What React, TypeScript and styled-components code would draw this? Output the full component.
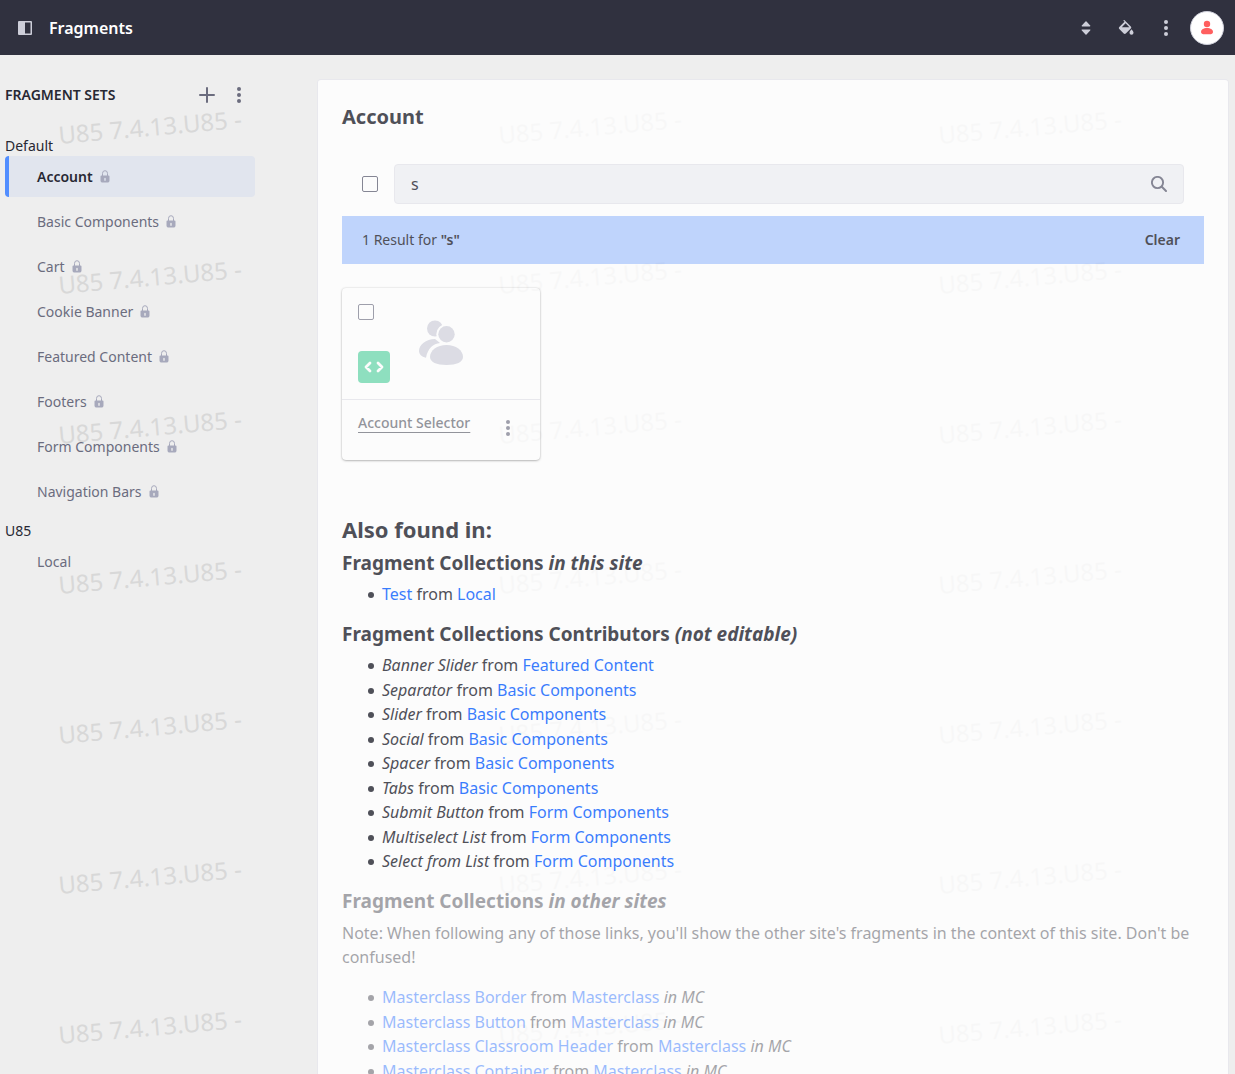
import React from 'react';
import styled, { createGlobalStyle } from 'styled-components';

const GlobalStyle = createGlobalStyle`
  *, *::before, *::after { box-sizing: border-box; }
  body {
    margin: 0;
    background: #eeeeee;
    color: #272833;
    font-family: "Noto Sans", "Open Sans", sans-serif;
    font-size: 16px;
    line-height: 24px;
  }
  h1, h2, h3, p, ul { margin: 0; padding: 0; }
  button, input { font: inherit; }
`;

const Page = styled.div`
  display: flex;
  flex-direction: column;
  height: 100vh;
  overflow: hidden;
`;

const TopBar = styled.header`
  display: flex;
  align-items: center;
  flex: none;
  height: 55px;
  padding: 0 11px 0 5px;
  background: #30313f;
  color: #ffffff;
`;

const TopTitle = styled.h1`
  flex: 1;
  margin-left: 4px;
  font-size: 16px;
  font-weight: 600;
  line-height: 24px;
`;

const IconButton = styled.button<{ $size: number; $color: string }>`
  display: inline-flex;
  align-items: center;
  justify-content: center;
  flex: none;
  width: ${(p) => p.$size}px;
  height: ${(p) => p.$size}px;
  padding: 0;
  border: 0;
  background: transparent;
  color: ${(p) => p.$color};
  cursor: pointer;
`;

const Avatar = styled.button`
  display: inline-flex;
  align-items: center;
  justify-content: center;
  width: 34px;
  height: 34px;
  margin-left: 4px;
  padding: 0;
  border: 1px solid #cdced9;
  border-radius: 50%;
  background: #ffffff;
  color: #ff5f5f;
  cursor: pointer;
`;

const Body = styled.div`
  position: relative;
  display: flex;
  flex: 1;
  min-height: 0;
  gap: 62px;
  padding: 24px 6px 0 5px;
`;

const Watermarks = styled.div`
  position: absolute;
  inset: 0;
  overflow: hidden;
  display: grid;
  grid-template-columns: repeat(3, 440px);
  grid-auto-rows: 150px;
  pointer-events: none;
  user-select: none;
`;

const WatermarkCell = styled.span`
  display: flex;
  align-items: center;
  justify-content: center;
  width: 300px;
  padding-bottom: 6px;
  color: #d8d8d8;
  font-size: 24px;
  white-space: nowrap;
`;

const WatermarkText = styled.span`
  transform: rotate(-5deg);
`;

const Sidebar = styled.nav`
  position: relative;
  flex: none;
  width: 250px;
  font-size: 14px;
  line-height: 21px;
`;

const SidebarHeader = styled.div`
  display: flex;
  align-items: center;
  height: 32px;
  margin-bottom: 24px;
`;

const SidebarTitle = styled.h2`
  flex: 1;
  font-size: 14px;
  font-weight: 600;
  line-height: 20px;
`;

const SetGroup = styled.section`
  margin-bottom: 8px;
`;

const GroupLabel = styled.h3`
  font-size: 14px;
  font-weight: 400;
  line-height: 21px;
`;

const SetList = styled.ul`
  list-style: none;
`;

const SetLink = styled.a<{ $active?: boolean }>`
  display: flex;
  align-items: center;
  gap: 7px;
  height: 41px;
  margin-bottom: 4px;
  padding-left: 28px;
  border-left: 4px solid ${(p) => (p.$active ? '#528eff' : 'transparent')};
  border-radius: 4px;
  background: ${(p) => (p.$active ? '#e1e5ee' : 'transparent')};
  color: ${(p) => (p.$active ? '#272833' : '#6b6c7e')};
  font-weight: ${(p) => (p.$active ? 600 : 400)};
  text-decoration: none;

  svg { color: #a7a9bc; }
`;

const Panel = styled.main`
  position: relative;
  flex: 1;
  min-width: 0;
  padding: 24px;
  border: 1px solid #e7e7ed;
  border-width: 1px 1px 0;
  border-radius: 4px 4px 0 0;
  background: #ffffff;
  background-clip: padding-box;
  opacity: 0.8;
  overflow-y: auto;
  scrollbar-width: none;
`;

const PanelTitle = styled.h2`
  font-size: 20px;
  font-weight: 700;
  line-height: 25px;
`;

const SearchRow = styled.form`
  display: flex;
  align-items: center;
  gap: 16px;
  margin-top: 35px;
  padding: 0 20px;
`;

const Checkbox = styled.input.attrs({ type: 'checkbox' })`
  appearance: none;
  flex: none;
  width: 16px;
  height: 16px;
  margin: 0;
  border: 1px solid #6b6c7e;
  border-radius: 2px;
  background: #ffffff;
`;

const SearchBox = styled.div`
  display: flex;
  align-items: center;
  flex: 1;
  height: 40px;
  padding: 0 8px 0 16px;
  border: 1px solid #e7e7ed;
  border-radius: 4px;
  background: #f1f2f5;
`;

const SearchInput = styled.input`
  flex: 1;
  min-width: 0;
  padding: 0;
  border: 0;
  outline: 0;
  background: transparent;
  color: #272833;
`;

const ResultBar = styled.div`
  display: flex;
  align-items: center;
  justify-content: space-between;
  height: 48px;
  margin-top: 12px;
  padding: 0 24px 0 20px;
  background: #b3cdff;
  font-size: 14px;
  line-height: 20px;

  strong { font-weight: 600; }
`;

const ClearButton = styled.button`
  padding: 0;
  border: 0;
  background: transparent;
  color: #272833;
  font-weight: 600;
  cursor: pointer;
`;

const Card = styled.article`
  width: 198px;
  margin-top: 24px;
  border-radius: 4px;
  background: #ffffff;
  box-shadow: 0 1px 3px -1px rgba(0, 0, 0, 0.6), 0 0 2px rgba(0, 0, 0, 0.2);
`;

const CardPreview = styled.div`
  position: relative;
  display: flex;
  align-items: center;
  justify-content: center;
  height: 112px;
  border-bottom: 1px solid #e7e7ed;
  color: #d7d8e2;
`;

const CardCheckbox = styled(Checkbox)`
  position: absolute;
  top: 16px;
  left: 16px;
  border-color: #8a8b9a;
`;

const Sticker = styled.span`
  position: absolute;
  left: 16px;
  bottom: 16px;
  display: flex;
  align-items: center;
  justify-content: center;
  width: 32px;
  height: 32px;
  border-radius: 4px;
  background: #76dbb3;
  color: #ffffff;
`;

const CardFooter = styled.div`
  display: flex;
  align-items: flex-start;
  justify-content: space-between;
  height: 60px;
  padding: 12px 16px;
  font-size: 14px;
  line-height: 21px;
`;

const CardLink = styled.a`
  color: #7b7d86;
  font-weight: 500;
  text-decoration: underline;
  text-underline-offset: 4px;
`;

const Heading = styled.h2`
  margin-top: 56px;
  font-size: 22px;
  font-weight: 700;
  line-height: 27px;
`;

const SubHeading = styled.h3`
  margin: 7px 0;
  font-size: 19px;
  font-weight: 700;
  line-height: 24px;

  ${Heading} + & { margin-top: 8px; }
`;

const Results = styled.ul`
  margin-bottom: 16px;
  padding-left: 40px;
  list-style: none;

  li { position: relative; }
  li:nth-child(odd):not(:last-child) { padding-bottom: 1px; }
  li::before {
    content: "";
    position: absolute;
    top: 10px;
    left: -14px;
    width: 6px;
    height: 6px;
    border-radius: 50%;
    background: #272833;
  }
`;

const Note = styled.p`
  margin: 8px 0 16px;
`;

const Dimmed = styled.section`
  opacity: 0.5;
`;

const TextLink = styled.a`
  color: #0b5fff;
  text-decoration: none;
`;

const Glyph = ({ size = 16, children }: { size?: number; children: React.ReactNode }) => (
  <svg width={size} height={size} viewBox="0 0 16 16" fill="currentColor" aria-hidden="true">
    {children}
  </svg>
);

const DotsIcon = () => (
  <Glyph>
    <circle cx="8" cy="2" r="2" />
    <circle cx="8" cy="8" r="2" />
    <circle cx="8" cy="14" r="2" />
  </Glyph>
);

const PanelIcon = () => (
  <Glyph>
    <path fillRule="evenodd" d="M2 1h12a1 1 0 0 1 1 1v12a1 1 0 0 1-1 1H2a1 1 0 0 1-1-1V2a1 1 0 0 1 1-1zm6 1.5v11h5.5v-11z" />
  </Glyph>
);

const SortIcon = () => (
  <Glyph>
    <path d="M4.2 6.500h7.600c.6 0 .8-.5.4-.9L8.500 1.500a.7.7 0 0 0-1 0L3.800 5.600c-.4.400-.2.900.4.900zM4.200 9.500h7.600c.6 0 .8.5.4.9l-3.700 4.100a.7.7 0 0 1-1 0l-3.700-4.100c-.4-.4-.2-.9.4-.9z" />
  </Glyph>
);

const BucketIcon = () => (
  <Glyph>
    <path fillRule="evenodd" d="M5.500.3a.8.8 0 0 1 1.100 0l6.200 6.200c.6.600.6 1.400 0 2l-5 5c-.600.600-1.500.600-2.100 0L1.300 9.100c-.600-.600-.6-1.500 0-2.100l5.200-5.200-1-1a.4.4 0 0 1 0-.500zM7.600 3.200L3.800 7.200h7.600z" />
    <path d="M13.500 9.200c1.100 1.300 2 2.400 2 3.500a2 2 0 0 1-4 0c0-1.100.9-2.200 2-3.500z" />
  </Glyph>
);

const UserIcon = () => (
  <Glyph>
    <circle cx="8" cy="4" r="3.200" />
    <path d="M8 8c3.500 0 6 1.600 6 4 0 1.400-1.500 2.300-3.500 2.300h-5c-2 0-3.500-.9-3.500-2.300 0-2.400 2.500-4 6-4z" />
  </Glyph>
);

const PlusIcon = () => (
  <Glyph>
    <path d="M7 1a1 1 0 0 1 2 0v6h6a1 1 0 0 1 0 2H9v6a1 1 0 0 1-2 0V9H1a1 1 0 0 1 0-2h6z" />
  </Glyph>
);

const LockIcon = () => (
  <svg width="10" height="13" viewBox="0 0 10 13" aria-hidden="true">
    <path d="M2.500 6V3.500a2.500 2.800 0 0 1 5 0V6" fill="none" stroke="currentColor" strokeWidth="1" />
    <path fillRule="evenodd" fill="currentColor" d="M1.500 5.500h7a1 1 0 0 1 1 1v4c0 1.400-1 2-2 2h-5c-1 0-2-.6-2-2v-4a1 1 0 0 1 1-1zM4.300 8.500v2.200h1.400V8.500a.7.7 0 0 0-1.400 0z" />
  </svg>
);

const SearchIcon = () => (
  <Glyph>
    <g fill="none" stroke="currentColor" strokeLinecap="round">
      <circle cx="6.500" cy="6.500" r="5.600" strokeWidth="1.900" />
      <path d="M10.800 10.800l4.200 4.200" strokeWidth="2" />
    </g>
  </Glyph>
);

const CodeIcon = () => (
  <svg width="20" height="12" viewBox="0 0 20 12" fill="none" stroke="currentColor" strokeWidth="2.800" strokeLinecap="round" strokeLinejoin="round" aria-hidden="true">
    <path d="M6 2L2 6l4 4M14 2l4 4l-4 4" />
  </svg>
);

const UsersIcon = () => (
  <svg width="44" height="48" viewBox="0 0 44 48" aria-hidden="true">
    <g fill="currentColor">
      <circle cx="16" cy="8.500" r="8" />
      <path d="M16 19c-9 0-16 6-16 12 0 3 2.500 5.900 7 6.700C9 28 14 24 21 23z" />
    </g>
    <g fill="currentColor" stroke="#ffffff" strokeWidth="4" style={{ paintOrder: 'stroke' }}>
      <path d="M27.500 25c9.500 0 16.500 5.500 16.500 12 0 5-6.500 8-16.500 8S11 42 11 37c0-6.500 7-12 16.500-12z" />
      <circle cx="27.500" cy="14.200" r="8.200" />
    </g>
  </svg>
);

const defaultSets = ['Account', 'Basic Components', 'Cart', 'Cookie Banner', 'Featured Content', 'Footers', 'Form Components', 'Navigation Bars'];

const contributed = [
  ['Banner Slider', 'Featured Content'],
  ['Separator', 'Basic Components'],
  ['Slider', 'Basic Components'],
  ['Social', 'Basic Components'],
  ['Spacer', 'Basic Components'],
  ['Tabs', 'Basic Components'],
  ['Submit Button', 'Form Components'],
  ['Multiselect List', 'Form Components'],
  ['Select from List', 'Form Components'],
];

const otherSites = ['Masterclass Border', 'Masterclass Button', 'Masterclass Classroom Header', 'Masterclass Container'];

export default function App() {
  return (
    <>
      <GlobalStyle />
      <Page>
        <TopBar>
          <IconButton $size={40} $color="#cdced9" aria-label="Toggle menu"><PanelIcon /></IconButton>
          <TopTitle>Fragments</TopTitle>
          <IconButton $size={40} $color="#cdced9" aria-label="Staging"><SortIcon /></IconButton>
          <IconButton $size={40} $color="#cdced9" aria-label="Theme"><BucketIcon /></IconButton>
          <IconButton $size={40} $color="#cdced9" aria-label="Options"><DotsIcon /></IconButton>
          <Avatar aria-label="User profile"><UserIcon /></Avatar>
        </TopBar>
        <Body>
          <Watermarks aria-hidden="true">
            {Array.from({ length: 21 }, (_, i) => (
              <WatermarkCell key={i}><WatermarkText>U85 7.4.13.U85 -</WatermarkText></WatermarkCell>
            ))}
          </Watermarks>
          <Sidebar aria-label="Fragment sets">
            <SidebarHeader>
              <SidebarTitle>FRAGMENT SETS</SidebarTitle>
              <IconButton $size={32} $color="#6b6c7e" aria-label="Add"><PlusIcon /></IconButton>
              <IconButton $size={32} $color="#6b6c7e" aria-label="More actions"><DotsIcon /></IconButton>
            </SidebarHeader>
            <SetGroup>
              <GroupLabel>Default</GroupLabel>
              <SetList>
                {defaultSets.map((name, i) => (
                  <li key={name}>
                    <SetLink href="#" $active={i === 0}>{name}<LockIcon /></SetLink>
                  </li>
                ))}
              </SetList>
            </SetGroup>
            <SetGroup>
              <GroupLabel>U85</GroupLabel>
              <SetList>
                <li><SetLink href="#">Local</SetLink></li>
              </SetList>
            </SetGroup>
          </Sidebar>
          <Panel>
            <PanelTitle>Account</PanelTitle>
            <SearchRow onSubmit={(e) => e.preventDefault()}>
              <Checkbox aria-label="Select all" />
              <SearchBox>
                <SearchInput aria-label="Search" defaultValue="s" />
                <IconButton type="submit" $size={32} $color="#6b6c7e" aria-label="Search"><SearchIcon /></IconButton>
              </SearchBox>
            </SearchRow>
            <ResultBar>
              <span>1 Result for <strong>"s"</strong></span>
              <ClearButton>Clear</ClearButton>
            </ResultBar>
            <Card>
              <CardPreview>
                <CardCheckbox aria-label="Select Account Selector" />
                <UsersIcon />
                <Sticker><CodeIcon /></Sticker>
              </CardPreview>
              <CardFooter>
                <CardLink href="#">Account Selector</CardLink>
                <IconButton $size={32} $color="#8a8b9a" aria-label="Fragment actions"><DotsIcon /></IconButton>
              </CardFooter>
            </Card>
            <Heading>Also found in:</Heading>
            <SubHeading>Fragment Collections <em>in this site</em></SubHeading>
            <Results>
              <li><TextLink href="#">Test</TextLink> from <TextLink href="#">Local</TextLink></li>
            </Results>
            <SubHeading>Fragment Collections Contributors <em>(not editable)</em></SubHeading>
            <Results>
              {contributed.map(([name, set]) => (
                <li key={name}><em>{name}</em> from <TextLink href="#">{set}</TextLink></li>
              ))}
            </Results>
            <Dimmed>
              <SubHeading>Fragment Collections <em>in other sites</em></SubHeading>
              <Note>Note: When following any of those links, you'll show the other site's fragments in the context of this site. Don't be confused!</Note>
              <Results>
                {otherSites.map((name) => (
                  <li key={name}><TextLink href="#">{name}</TextLink> from <TextLink href="#">Masterclass</TextLink> <em>in MC</em></li>
                ))}
              </Results>
            </Dimmed>
          </Panel>
        </Body>
      </Page>
    </>
  );
}
